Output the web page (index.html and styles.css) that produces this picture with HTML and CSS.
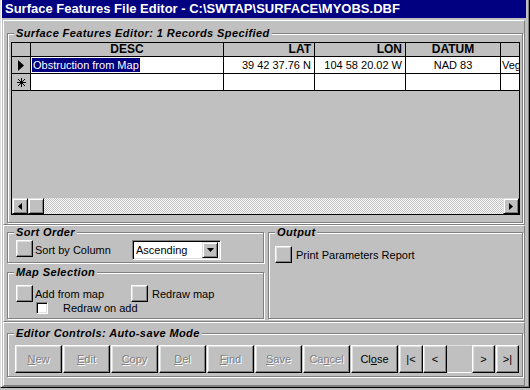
FILE: index.html
```html
<!DOCTYPE html>
<html>
<head>
<meta charset="utf-8">
<title>Surface Features File Editor</title>
<link rel="stylesheet" href="styles.css">
</head>
<body>
<div class="window">
  <div class="titlebar">Surface Features File Editor - C:\SWTAP\SURFACE\MYOBS.DBF</div>
  <div class="client">
    <div class="pane top-pane">
      <fieldset class="group grid-group">
        <legend>Surface Features Editor: 1 Records Specified</legend>
        <div class="grid-body">
          <div class="grid">
            <div class="rows">
              <div class="cell sel hdr"></div>
              <div class="cell hdr center">DESC</div>
              <div class="cell hdr right">LAT</div>
              <div class="cell hdr right">LON</div>
              <div class="cell hdr center">DATUM</div>
              <div class="cell hdr"></div>

              <div class="cell sel"><svg width="6" height="11" viewBox="0 0 6 11"><polygon points="0,0 6,5.5 0,11" fill="#000"/></svg></div>
              <div class="cell data"><span class="selected">Obstruction from Map</span></div>
              <div class="cell data right">39 42 37.76 N</div>
              <div class="cell data right">104 58 20.02 W</div>
              <div class="cell data center">NAD 83</div>
              <div class="cell data clip">Veg</div>

              <div class="cell sel"><svg width="9" height="9" viewBox="0 0 9 9"><path d="M4.5 0V9M0 4.5H9M1 1L8 8M8 1L1 8" stroke="#000" stroke-width="1" fill="none"/></svg></div>
              <div class="cell data"></div>
              <div class="cell data"></div>
              <div class="cell data"></div>
              <div class="cell data"></div>
              <div class="cell data"></div>
            </div>
            <div class="grid-empty"></div>
            <div class="hscroll">
              <div class="sb-btn"><svg width="4" height="7" viewBox="0 0 4 7"><polygon points="4,0 0,3.5 4,7" fill="#000"/></svg></div>
              <div class="sb-btn"></div>
              <div class="sb-track"></div>
              <div class="sb-btn"><svg width="4" height="7" viewBox="0 0 4 7"><polygon points="0,0 4,3.5 0,7" fill="#000"/></svg></div>
            </div>
          </div>
        </div>
      </fieldset>
    </div>

    <div class="pane mid-pane">
      <div class="left-col">
        <fieldset class="group sort-group">
          <legend>Sort Order</legend>
          <div class="sort-body">
            <div class="toggle"></div>
            <span class="lbl">Sort by Column</span>
            <div class="combo">
              <span class="combo-text">Ascending</span>
              <div class="combo-btn"><svg width="7" height="4" viewBox="0 0 7 4"><polygon points="0,0 7,0 3.5,4" fill="#000"/></svg></div>
            </div>
          </div>
        </fieldset>
        <fieldset class="group map-group">
          <legend>Map Selection</legend>
          <div class="map-body">
            <div class="map-row">
              <div class="toggle"></div>
              <span class="lbl">Add from map</span>
              <div class="toggle"></div>
              <span class="lbl lbl-wide">Redraw map</span>
            </div>
            <div class="check-row">
              <div class="checkbox"></div>
              <span class="lbl">Redraw on add</span>
            </div>
          </div>
        </fieldset>
      </div>
      <fieldset class="group output-group">
        <legend>Output</legend>
        <div class="output-body">
          <div class="toggle"></div>
          <span class="lbl lbl-wide">Print Parameters Report</span>
        </div>
      </fieldset>
    </div>

    <div class="pane bottom-pane">
      <fieldset class="group controls-group">
        <legend>Editor Controls: Auto-save Mode</legend>
        <div class="controls-body">
          <div class="btn wide disabled"><u>N</u>ew</div>
          <div class="btn wide disabled"><u>E</u>dit</div>
          <div class="btn wide disabled"><u>C</u>opy</div>
          <div class="btn wide disabled"><u>D</u>el</div>
          <div class="btn wide disabled"><u>F</u>ind</div>
          <div class="btn wide disabled"><u>S</u>ave</div>
          <div class="btn wide disabled">Ca<u>n</u>cel</div>
          <div class="btn wide">Cl<u>o</u>se</div>
          <div class="btn nav nav-first">|&lt;</div>
          <div class="btn nav">&lt;</div>
          <div class="nav-field"></div>
          <div class="btn nav nav-small">&gt;</div>
          <div class="btn nav nav-small nav-last">&gt;|</div>
        </div>
      </fieldset>
    </div>
  </div>
</div>
</body>
</html>
```

FILE: styles.css
```css
* { box-sizing: border-box; }
html, body { margin: 0; padding: 0; }
body {
  background: #c0c0c0;
  font-family: "Liberation Sans", Arial, sans-serif;
  font-size: 11px;
  color: #000;
  width: 530px;
  height: 390px;
  overflow: hidden;
}

.window {
  width: 530px;
  height: 388px;
  display: flex;
  flex-direction: column;
  border-left: 1px solid #dfdfdf;
  border-right: 1px solid #000;
  border-bottom: 1px solid #000;
  padding: 0 3px 1px 1px;
  box-shadow: inset 1px 0 #fff, inset -1px -1px #808080;
}

.titlebar {
  height: 18px;
  flex: none;
  background: #000080;
  color: #fff;
  font-weight: bold;
  font-size: 13px;
  line-height: 18px;
  padding-left: 3px;
  white-space: nowrap;
  overflow: hidden;
}

.client {
  flex: 1;
  display: flex;
  flex-direction: column;
  padding: 2px 1px 0 1px;
}

.pane {
  border: 1px solid;
  border-color: #fff #808080 #808080 #fff;
}

.top-pane { height: 205px; padding: 6px 1px 0 3px; flex: none; }
.mid-pane { height: 97px; padding: 0 1px 0 3px; flex: none; display: flex; gap: 4px; }
.bottom-pane { flex: 1; padding: 4px 1px 0 3px; }

/* group boxes */
.group {
  margin: 0;
  padding: 0;
  min-width: 0;
  border: 1px solid #808080;
  box-shadow: inset 1px 1px #fff, 1px 1px #fff;
}
.group > legend {
  margin-left: 6px;
  padding: 0 2px;
  font-weight: bold;
  font-style: italic;
  font-size: 11px;
  letter-spacing: 0.4px;
  line-height: 13px;
  background: #c0c0c0;
}

.grid-group { width: 516px; height: 196px; }
.grid-body { padding: 2px 0 0 3px; }

/* datasheet grid */
.grid {
  width: 509px;
  height: 173px;
  border: 1px solid #000;
  display: flex;
  flex-direction: column;
  background: #c0c0c0;
}
.rows {
  width: 507px;
  overflow: hidden;
  display: grid;
  grid-template-columns: 19px 193px 91px 91px 95px 18px;
  grid-template-rows: 14px 17px 17px;
  flex: none;
}
.cell {
  border-right: 1px solid #000;
  border-bottom: 1px solid #000;
  white-space: nowrap;
  overflow: hidden;
  display: flex;
  align-items: center;
}
.cell:nth-child(6n) { border-right: 0; }
.cell.clip { padding: 0 0 0 1px; }
.cell.hdr {
  background: #c0c0c0;
  font-weight: bold;
  font-size: 12px;
  line-height: 13px;
}
.cell.sel { background: #c0c0c0; justify-content: center; }
.cell.data { background: #fff; padding: 0 1px; line-height: 14px; }
.cell.center { justify-content: center; }
.cell.right { justify-content: flex-end; padding-right: 3px; }
.cell.hdr.right { padding-right: 3px; }
.selected {
  background: #000080;
  color: #fff;
  padding: 0 1px;
  line-height: 14px;
}
.grid-empty { flex: 1; }

.hscroll { height: 16px; display: flex; flex: none; }
.sb-btn {
  width: 16px;
  height: 16px;
  flex: none;
  background: #c0c0c0;
  border: 1px solid;
  border-color: #dfdfdf #000 #000 #dfdfdf;
  box-shadow: inset 1px 1px #fff, inset -1px -1px #808080;
  display: flex;
  align-items: center;
  justify-content: center;
}
.sb-track {
  flex: 1;
  background: repeating-conic-gradient(#fff 0 25%, #c0c0c0 0 50%) 0 0 / 2px 2px;
}

/* 3d controls */
.toggle {
  width: 17px;
  height: 17px;
  flex: none;
  background: #c0c0c0;
  border: 1px solid;
  border-color: #fff #000 #000 #fff;
  box-shadow: inset -1px -1px #808080, inset 1px 1px #dfdfdf;
}
.lbl { padding-left: 2px; white-space: nowrap; }
.lbl-wide { padding-left: 4px; }

.sort-group { width: 257px; height: 37px; }
.sort-body {
  display: grid;
  grid-template-columns: 17px 99px 89px;
  align-items: center;
  padding: 1px 0 0 8px;
}
.sort-body .toggle { align-self: start; }
.combo {
  width: 89px;
  height: 20px;
  border: 1px solid;
  border-color: #808080 #fff #fff #808080;
  box-shadow: inset 1px 1px #000, inset -1px -1px #dfdfdf;
  background: #fff;
  display: flex;
  align-items: center;
  padding: 2px 2px 2px 3px;
}
.combo-text { flex: 1; }
.combo-btn {
  width: 16px;
  height: 16px;
  background: #c0c0c0;
  border: 1px solid;
  border-color: #dfdfdf #000 #000 #dfdfdf;
  box-shadow: inset 1px 1px #fff, inset -1px -1px #808080;
  display: flex;
  align-items: center;
  justify-content: center;
}

.map-group { width: 257px; height: 53px; margin-top: 3px; }
.map-body { padding: 6px 0 0 8px; }
.map-row {
  display: grid;
  grid-template-columns: 17px 98px 17px auto;
  align-items: center;
}
.check-row {
  display: flex;
  align-items: center;
  padding-left: 20px;
  height: 12px;
}
.checkbox {
  width: 12px;
  height: 12px;
  background: #fff;
  border: 1px solid;
  border-color: #808080 #fff #fff #808080;
  box-shadow: inset 1px 1px #000, inset -1px -1px #dfdfdf;
}
.check-row .lbl { padding-left: 15px; }

.output-group { width: 255px; height: 93px; }
.output-body {
  display: flex;
  align-items: center;
  padding: 7px 0 0 6px;
}

/* editor controls */
.controls-group { width: 516px; height: 50px; }
.controls-body {
  display: flex;
  gap: 1px;
  padding: 5px 0 0 7px;
}
.btn {
  height: 28px;
  flex: none;
  background: #c0c0c0;
  border: 1px solid;
  border-color: #fff #000 #000 #fff;
  box-shadow: inset -1px -1px #808080, inset 1px 1px #dfdfdf;
  display: flex;
  align-items: center;
  justify-content: center;
  white-space: nowrap;
}
.btn.wide { width: 47px; }
.btn.disabled { color: #808080; text-shadow: 1px 1px 0 #fff; }
.btn.nav { width: 24px; margin-right: -1px; }
.btn.nav-small { width: 23px; }
.btn.nav-last { margin-left: 1px; }
.nav-field {
  width: 25px;
  height: 28px;
  flex: none;
  margin-right: -1px;
  border: 1px solid;
  border-color: #dfdfdf #c0c0c0 #fff #c0c0c0;
  background: #c0c0c0;
}
```
